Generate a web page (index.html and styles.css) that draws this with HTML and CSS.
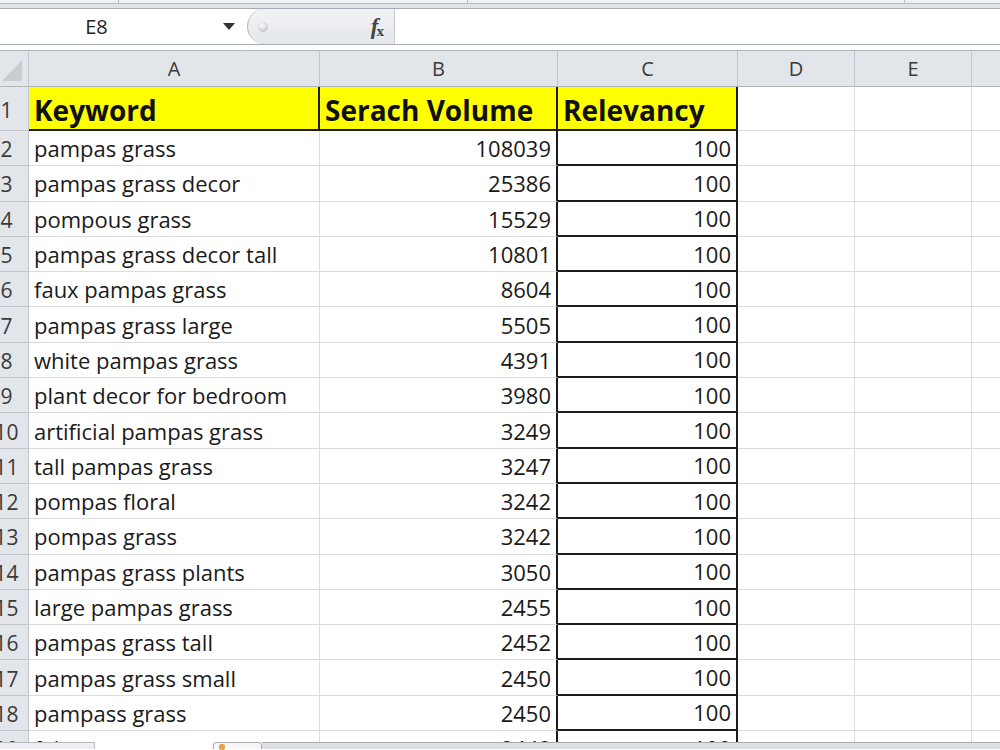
FILE: index.html
```html
<!DOCTYPE html>
<html lang="en">
<head>
  <meta charset="UTF-8">
  <title>Keywords - Excel</title>
  <link rel="stylesheet" href="styles.css">
</head>
<body>
  <div class="topband">
    <span class="div" style="left:118px"></span>
    <span class="div" style="left:467px"></span>
    <span class="div" style="left:904px"></span>
  </div>

  <div class="formulabar">
    <div class="namebox">
      <span class="ref">E8</span>
      <span class="arrow"></span>
    </div>
    <div class="fxbox">
      <span class="grip"></span>
      <span class="fx"><i>f</i><sub>x</sub></span>
    </div>
    <div class="input"></div>
  </div>

  <div class="sheet" id="sheet">
    <div class="corner"><span class="tri"></span></div>
    <div class="colhead">A</div>
    <div class="colhead">B</div>
    <div class="colhead">C</div>
    <div class="colhead">D</div>
    <div class="colhead">E</div>
    <div class="colhead"></div>

    <div class="rowhead">1</div>
    <div class="cell title a">Keyword</div>
    <div class="cell title b">Serach Volume</div>
    <div class="cell title c">Relevancy</div>
    <div class="cell"></div>
    <div class="cell"></div>
    <div class="cell"></div>
  </div>

  <div class="tabs">
    <div class="nav"></div>
    <div class="blank"></div>
    <div class="tab"><span class="ico"></span></div>
    <div class="scroll"></div>
  </div>

  <script>
    const rows = [
      ["pampas grass", 108039],
      ["pampas grass decor", 25386],
      ["pompous grass", 15529],
      ["pampas grass decor tall", 10801],
      ["faux pampas grass", 8604],
      ["pampas grass large", 5505],
      ["white pampas grass", 4391],
      ["plant decor for bedroom", 3980],
      ["artificial pampas grass", 3249],
      ["tall pampas grass", 3247],
      ["pompas floral", 3242],
      ["pompas grass", 3242],
      ["pampas grass plants", 3050],
      ["large pampas grass", 2455],
      ["pampas grass tall", 2452],
      ["pampas grass small", 2450],
      ["pampass grass", 2450],
      ["fake pampas grass", 2448]
    ];

    const sheet = document.getElementById("sheet");
    let html = "";
    rows.forEach(function (r, i) {
      html += '<div class="rowhead">' + (i + 2) + '</div>' +
        '<div class="cell">' + r[0] + '</div>' +
        '<div class="cell num b">' + r[1] + '</div>' +
        '<div class="cell num c">100</div>' +
        '<div class="cell"></div><div class="cell"></div><div class="cell"></div>';
    });
    sheet.insertAdjacentHTML("beforeend", html);
  </script>
</body>
</html>
```

FILE: styles.css
```css
* {
  box-sizing: border-box;
}
body {
  margin: 0;
  width: 1000px;
  height: 750px;
  overflow: hidden;
  background: #fff;
  font-family: "Open Sans", Lato, sans-serif;
  color: #1a1a1a;
  position: relative;
}

/* ribbon edge */
.topband {
  height: 9px;
  position: relative;
  background: #dfe3e8;
  border-top: 3px solid #eef0f3;
  border-bottom: 1px solid #a9aeb5;
  box-shadow: inset 0 1px 0 #b9bec4;
}
.topband .div {
  position: absolute;
  top: -3px;
  width: 1px;
  height: 3px;
  background: #b9bec4;
}

/* formula bar */
.formulabar {
  display: flex;
  height: 36px;
  background: #fff;
  border-bottom: 1px solid #a9aeb5;
}
.namebox {
  width: 247px;
  display: flex;
  align-items: center;
}
.namebox .ref {
  flex: 1;
  text-align: center;
  font-size: 20px;
  color: #222;
  padding-right: 30px;
}
.namebox .arrow {
  width: 0;
  height: 0;
  border-left: 6px solid transparent;
  border-right: 6px solid transparent;
  border-top: 7px solid #333;
  margin-right: 12px;
}
.fxbox {
  width: 148px;
  display: flex;
  align-items: center;
  justify-content: space-between;
  background: linear-gradient(#f2f3f5, #e4e7eb);
  border-left: 1px solid #b3b8be;
  border-right: 1px solid #c6cad0;
  border-radius: 18px 0 0 18px;
  padding: 0 10px;
}
.fxbox .grip {
  width: 10px;
  height: 10px;
  border-radius: 50%;
  background: radial-gradient(circle at 40% 35%, #fff, #c4c8cd 70%);
}
.fxbox .fx {
  font-family: "Liberation Serif", serif;
  font-size: 23px;
  color: #444;
  font-weight: bold;
}
.fxbox .fx sub {
  font-size: 15px;
  vertical-align: -2px;
  margin-left: -2px;
}
.input {
  flex: 1;
  background: #fff;
}

/* grid */
.sheet {
  margin-top: 5px;
  margin-left: -15px;
  height: 692px;
  overflow: hidden;
  display: grid;
  grid-template-columns: 44px 291px 238px 180px 117px 117px 100px;
  grid-template-rows: 36px 44px repeat(19, 35.3px);
  border-top: 1px solid #b0b5bb;
  background: #fff;
}
.corner,
.colhead,
.rowhead {
  background: #e2e6eb;
  color: #3a3a3a;
  font-size: 20px;
  display: flex;
  align-items: center;
  justify-content: center;
  border-right: 1px solid #c3c7cd;
  border-bottom: 1px solid #c3c7cd;
}
.colhead,
.corner {
  border-bottom: 1px solid #b0b5bb;
}
.corner {
  position: relative;
}
.corner .tri {
  position: absolute;
  right: 6px;
  bottom: 5px;
  width: 0;
  height: 0;
  border-left: 20px solid transparent;
  border-bottom: 21px solid #c9cdd2;
}
.rowhead {
  font-size: 21px;
  padding-top: 2px;
}
.cell {
  border-right: 1px solid #dadcdf;
  border-bottom: 1px solid #dadcdf;
  font-size: 22px;
  padding: 0 5px;
  display: flex;
  align-items: center;
  white-space: nowrap;
  overflow: hidden;
}
.num {
  justify-content: flex-end;
}
.b {
  border-right: 2px solid #1c1c1c;
}
.c {
  border-right: 2px solid #1c1c1c;
  border-bottom: 2px solid #1c1c1c;
}
.title {
  background: #ffff00;
  font-weight: bold;
  font-size: 28px;
  color: #111;
  border-bottom: 2px solid #1c1c1c;
  padding: 3px 5px 0;
}
.title.a {
  border-right: 2px solid #1c1c1c;
}

/* sheet tabs strip */
.tabs {
  display: flex;
  height: 7px;
}
.tabs .nav {
  width: 95px;
  background: #eceef1;
  border-top: 1px solid #b8bcc2;
  border-right: 1px solid #b8bcc2;
}
.tabs .blank {
  width: 118px;
  background: #fff;
}
.tabs .tab {
  width: 49px;
  background: #f7f7f7;
  border: 1px solid #a9aeb4;
  border-bottom: none;
  border-radius: 4px 4px 0 0;
  padding: 1px 0 0 5px;
}
.tabs .ico {
  display: block;
  width: 6px;
  height: 6px;
  background: #e8a640;
  border-radius: 2px;
}
.tabs .scroll {
  flex: 1;
  background: #dde1e6;
  border-top: 1px solid #a9aeb4;
}
```
